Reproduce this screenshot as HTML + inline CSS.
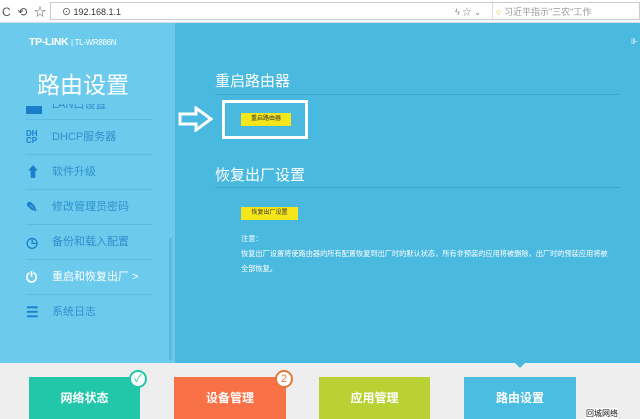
<!DOCTYPE html>
<html><head><meta charset="utf-8"><style>
*{margin:0;padding:0;box-sizing:border-box}
body{width:640px;height:419px;overflow:hidden;position:relative;font-family:"Liberation Sans","Noto Sans CJK SC",sans-serif;background:#4ab9e0}
.a{position:absolute}
.top{left:0;top:0;width:640px;height:23px;background:#fff;border-bottom:1px solid #ddd}
.side{left:0;top:23px;width:175px;height:340px;background:#6ccbec}
.it{left:26px;width:126px;height:35px;border-bottom:1px solid #5dbde0;color:#2f8fcf;font-size:11px;line-height:35px}
.it span{position:absolute;left:26px}
.ic{position:absolute;left:0;top:10px;width:16px;height:14px;color:#1a7fca;font-size:14px;line-height:14px;font-weight:bold}
.h{color:#fff;font-size:15px}
.line{height:1px;background:#3aa4cf}
.btn{background:#f4e61a;font-size:6px;color:#333;text-align:center;line-height:13px}
.note{color:#fff;font-size:7.2px;line-height:15px}
.bot{left:0;top:363px;width:640px;height:56px;background:#eeeeee}
.tile{top:377px;height:42px;color:#fff;font-size:12px;font-weight:bold;text-align:center;line-height:42px}
.bd{width:18px;height:18px;border-radius:50%;background:#fff;border:2px solid;font-size:11px;text-align:center;line-height:14px}
</style></head><body>
<div class="a top">
<div class="a" style="left:2px;top:3px;font-size:12px;color:#555">C&nbsp; ⟲&nbsp; ☆</div>
<div class="a" style="left:50px;top:2px;width:590px;height:18px;border:1px solid #ccc"></div>
<div class="a" style="left:62px;top:5px;font-size:9px;color:#333">⊙ 192.168.1.1</div>
<div class="a" style="left:455px;top:5px;font-size:9px;color:#888">ϟ ☆ ⌄</div>
<div class="a" style="left:492px;top:1px;width:1px;height:20px;background:#ddd"></div>
<div class="a" style="left:496px;top:5px;font-size:9px;color:#999"><span style="color:#e8a92a">○</span> 习近平指示"三农"工作</div>
</div>
<div class="a side"></div>
<div class="a" style="left:29px;top:36px;color:#fff;font-size:10.5px;font-weight:bold;letter-spacing:-0.3px">TP-LINK <span style="font-weight:normal;font-size:8px">| TL-WR886N</span></div>
<div class="a" style="left:37px;top:66px;color:#fff;font-size:23px">路由设置</div>
<div class="a" style="left:26px;top:104px;width:126px;height:16px;overflow:hidden;border-bottom:1px solid #5dbde0"><div class="a" style="left:0;top:2px;width:16px;height:8px;background:#1a7fca"></div><span class="a" style="left:26px;top:-5px;color:#2f8fcf;font-size:11px;line-height:13px">LAN口设置</span></div>
<div class="a it" style="top:120px"><div class="ic" style="font-size:8px;line-height:7px">DH<br>CP</div><span>DHCP服务器</span></div>
<div class="a it" style="top:155px"><div class="ic">⬆</div><span>软件升级</span></div>
<div class="a it" style="top:190px"><div class="ic">✎</div><span>修改管理员密码</span></div>
<div class="a it" style="top:225px"><div class="ic">◷</div><span>备份和载入配置</span></div>
<div class="a it" style="top:260px;color:#fff"><div class="ic" style="color:#fff">⏻</div><span>重启和恢复出厂 &gt;</span></div>
<div class="a it" style="top:295px;border:none"><div class="ic">☰</div><span>系统日志</span></div>
<div class="a" style="left:169px;top:238px;width:3px;height:122px;background:#5cb9df"></div>
<div class="a" style="left:631px;top:37px;color:#fff;font-size:8px">⊪</div>
<div class="a h" style="left:215px;top:70px">重启路由器</div>
<div class="a line" style="left:215px;top:94px;width:405px"></div>
<svg class="a" style="left:178px;top:106px" width="36" height="26"><path d="M2 8H18V2L33 13L18 24V18H2Z" fill="none" stroke="#fff" stroke-width="3"/></svg>
<div class="a" style="left:222px;top:100px;width:86px;height:39px;border:3px solid #fff"></div>
<div class="a btn" style="left:241px;top:113px;width:50px">重启路由器</div>
<div class="a h" style="left:215px;top:164px">恢复出厂设置</div>
<div class="a line" style="left:215px;top:187px;width:405px"></div>
<div class="a btn" style="left:241px;top:207px;width:57px">恢复出厂设置</div>
<div class="a note" style="left:241px;top:231px;width:370px">注意：<br>恢复出厂设置将使路由器的所有配置恢复到出厂时的默认状态，所有非预装的应用将被删除，出厂时的预装应用将被全部恢复。</div>
<div class="a bot"></div>
<div class="a" style="left:514px;top:362px;width:0;height:0;border-left:6px solid transparent;border-right:6px solid transparent;border-top:6px solid #4ab9e0"></div>
<div class="a tile" style="left:29px;width:111px;background:#22c6a8">网络状态</div>
<div class="a tile" style="left:174px;width:112px;background:#f97147">设备管理</div>
<div class="a tile" style="left:319px;width:111px;background:#b9d133">应用管理</div>
<div class="a tile" style="left:464px;width:112px;background:#4bbde3">路由设置</div>
<div class="a bd" style="left:129px;top:370px;border-color:#22c6a8;color:#22c6a8">✓</div>
<div class="a bd" style="left:275px;top:370px;border-color:#e07a3c;color:#e07a3c">2</div>
<div class="a" style="left:586px;top:408px;font-size:8px;color:#111;background:#fff">回城网络</div>
</body></html>
